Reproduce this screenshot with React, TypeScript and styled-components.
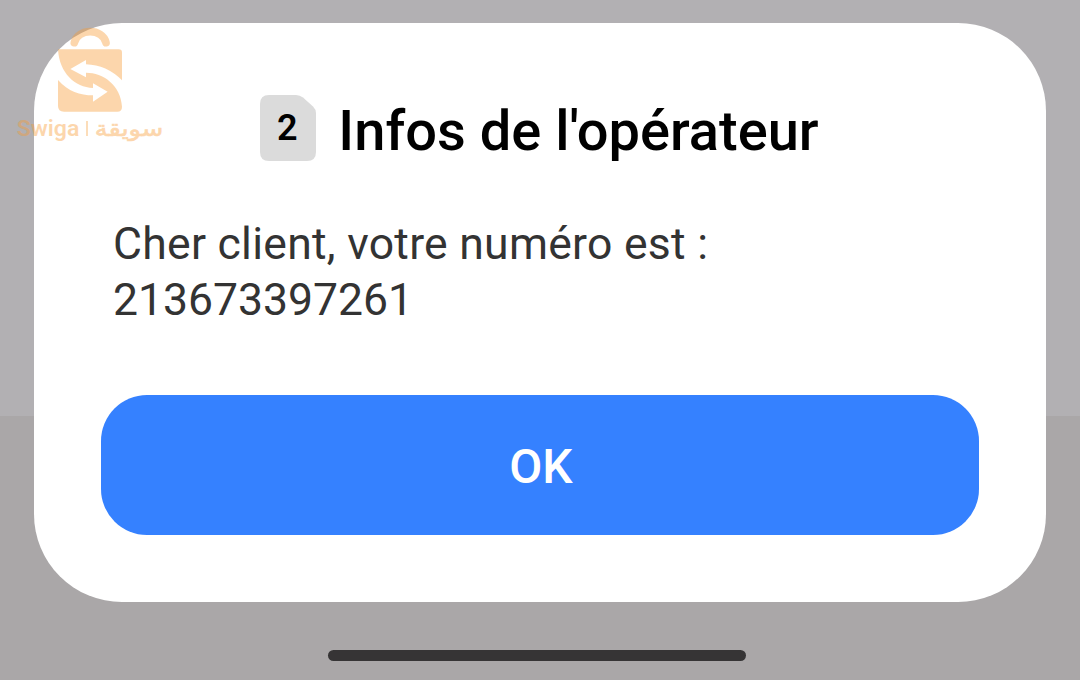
import React from "react";
import styled, { createGlobalStyle } from "styled-components";

const GlobalStyle = createGlobalStyle`
  * {
    box-sizing: border-box;
  }

  body {
    margin: 0;
    font-family: Roboto, "Liberation Sans", sans-serif;
  }
`;

const Watermark: React.FC = () => (
  <WatermarkSvg
    width="180"
    height="150"
    viewBox="0 0 540 450"
    fill="none"
    xmlns="http://www.w3.org/2000/svg"
  >
    <path
      d="M223 98C232 54 309 54 318 98"
      stroke="#f99b32"
      strokeWidth="23"
      strokeLinecap="round"
    />
    <path
      d="M174 118H356Q366 118 366 128V211Q320 165 258 163V150L211 177L258 202V188C310 188 362 225 366 290Q366 305 352 305H192Q174 305 174 288V210C205 245 240 256 279 256V275L323 245L279 220V234C225 232 178 190 174 118Z"
      fill="#f99b32"
    />
    <text
      x="50"
      y="379"
      fontSize="65"
      fontWeight="600"
      textLength="188"
      lengthAdjust="spacingAndGlyphs"
    >
      Swiga
    </text>
    <path d="M261 333V378" stroke="#f99b32" strokeWidth="5" />
    <text
      x="284"
      y="379"
      fontSize="64"
      textLength="206"
      lengthAdjust="spacingAndGlyphs"
      className="arabic"
    >
      سويقة
    </text>
  </WatermarkSvg>
);

const SimBadge: React.FC<{ slot: number }> = ({ slot }) => (
  <Sim>
    <svg width="56" height="66" viewBox="0 0 56 66" fill="none">
      <path
        d="M9 0H36Q40 0 43 2.500L53 11.500Q56 14.500 56 18V57Q56 66 47 66H9Q0 66 0 57V9Q0 0 9 0Z"
        fill="#dbdbdb"
      />
    </svg>
    <SimNumber>{slot}</SimNumber>
  </Sim>
);

const App: React.FC = () => {
  return (
    <>
      <GlobalStyle />
      <Screen>
        <Dialog>
          <Header>
            <SimBadge slot={2} />
            <Title>Infos de l'opérateur</Title>
          </Header>
          <Message>
            <Sentence>Cher client, votre numéro est :</Sentence>
            <br />
            213673397261
          </Message>
          <OkButton>OK</OkButton>
        </Dialog>
        <HomeBar />
        <Watermark />
      </Screen>
    </>
  );
};

const Screen = styled.div`
  position: relative;
  width: 1080px;
  height: 680px;
  padding: 23px 34px 0;
  overflow: hidden;
  background: linear-gradient(#b2b0b3 416px, #aaa7a8 416px);
`;

const Dialog = styled.div`
  display: flex;
  flex-direction: column;
  height: 579px;
  padding: 72px 67px 0;
  border-radius: 88px;
  background: #fff;
`;

const Header = styled.div`
  display: flex;
  justify-content: center;
  align-items: flex-start;
  gap: 22px;
  height: 72px;
  padding-right: 1px;
`;

const Sim = styled.div`
  display: grid;
  width: 56px;
  height: 66px;

  > * {
    grid-area: 1 / 1;
  }
`;

const SimNumber = styled.span`
  justify-self: center;
  font-size: 36px;
  font-weight: 600;
  line-height: 67px;
  padding-right: 2px;
`;

const Title = styled.h1`
  margin: 0;
  color: #000;
  font-size: 56px;
  font-weight: 500;
  line-height: 72px;
  white-space: nowrap;
`;

const Message = styled.p`
  margin: 49px 12px 0;
  color: #333;
  font-size: 44.5px;
  line-height: 56px;
`;

const Sentence = styled.span`
  letter-spacing: 0.27px;
`;

const OkButton = styled.button`
  height: 140px;
  margin-top: 67px;
  padding: 2px 0 0 2px;
  border: 0;
  border-radius: 46px;
  background: #3581ff;
  color: #fff;
  font-family: inherit;
  font-size: 48px;
  font-weight: 500;
`;

const HomeBar = styled.div`
  width: 418px;
  height: 11px;
  margin: 48px 0 0 294px;
  border-radius: 6px;
  background: #363435;
`;

const WatermarkSvg = styled.svg`
  position: absolute;
  top: 10px;
  left: 0;
  opacity: 0.4;

  text {
    fill: #f99b32;
    font-family: Roboto, sans-serif;
  }

  .arabic {
    font-family: "DejaVu Sans", sans-serif;
    stroke: #f99b32;
    stroke-width: 2px;
  }
`;

export default App;
